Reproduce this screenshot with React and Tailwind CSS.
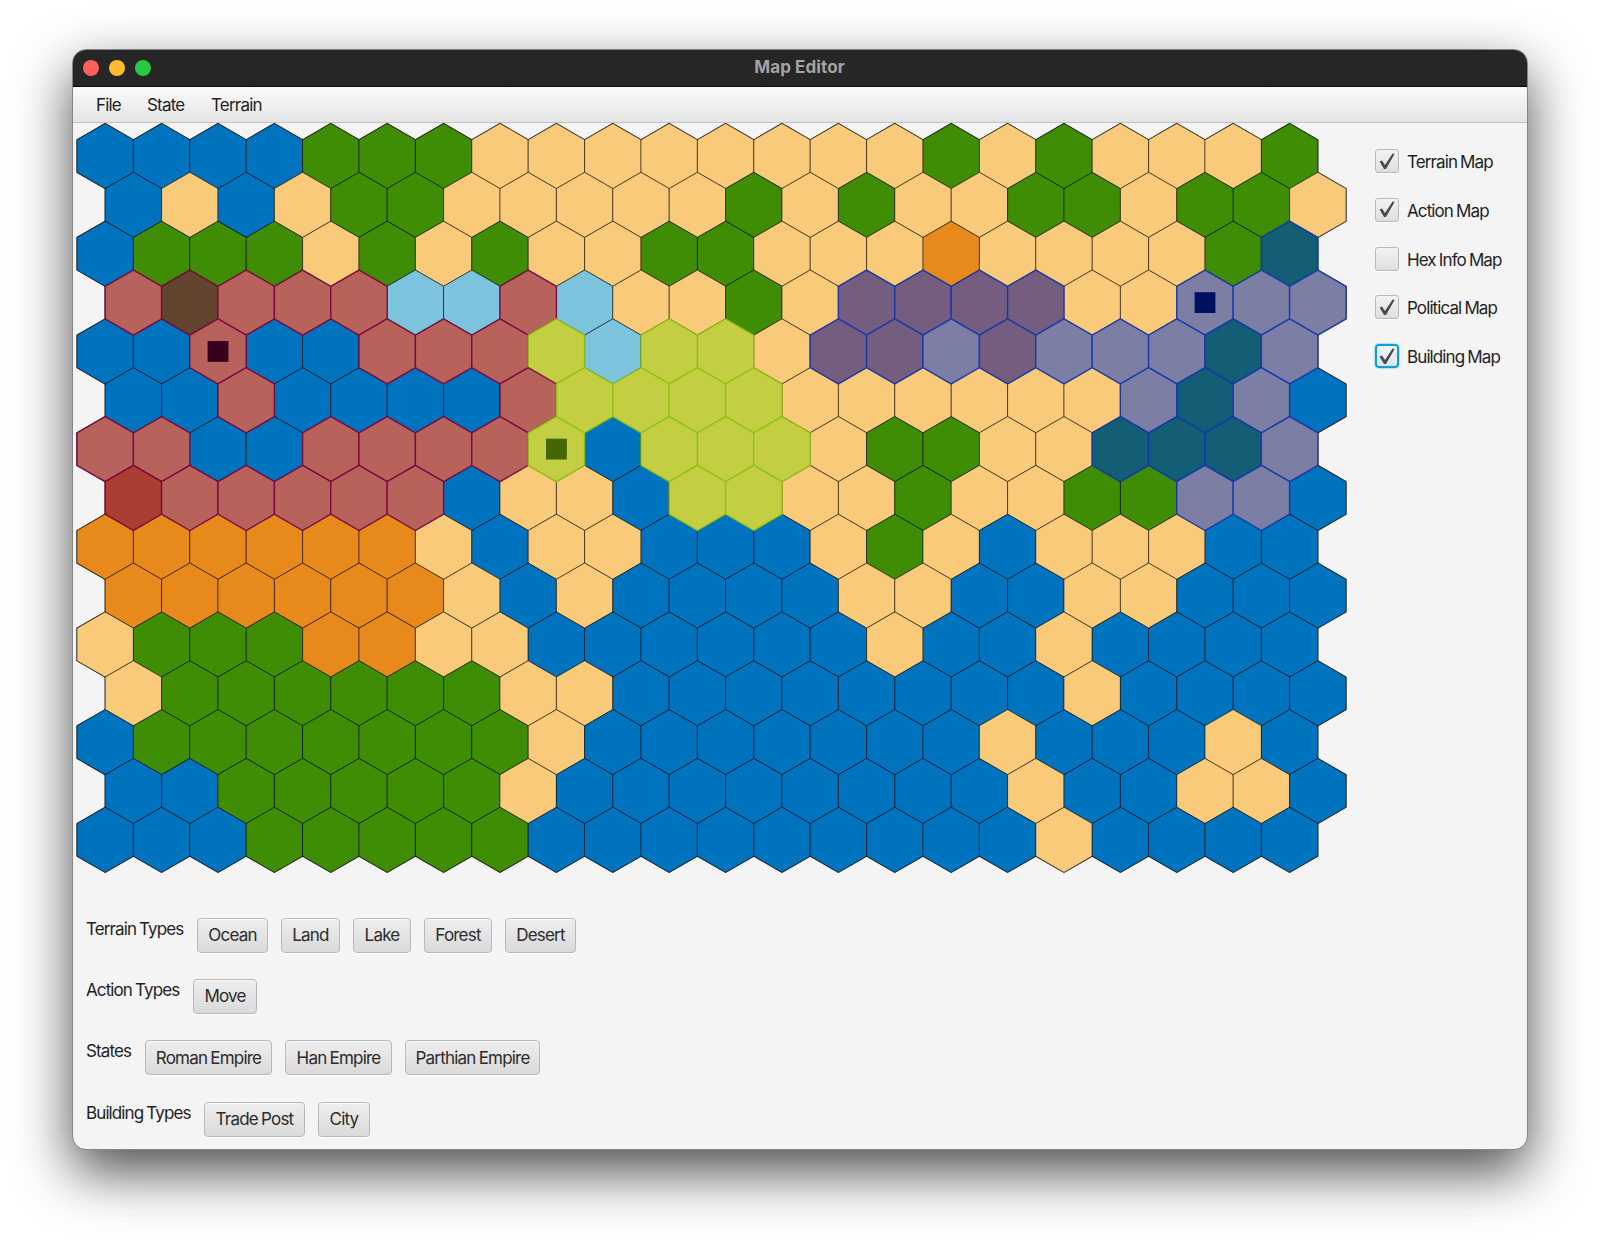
const W = 56.4;
const S = 32.56;
const PITCH = 48.84;

// O ocean, L land, K lake, F forest, D desert
// R/S/T: Roman land, forest, desert; P: Parthian land; H/I/J: Han land, forest, desert
const ROWS = [
  "OOOOFFFLLLLLLLLFLFLLLF",
  "OLOLFFLLLLLFLFLLFFLFFL",
  "OFFFLFLFLLFFLLLDLLLLFI",
  "RSRRRKKRKLLFLJJJJLLHHH",
  "OOROORRRPKPPLJJHJHHHIH",
  "OOROOOORPPPPLLLLLLHIHO",
  "RROORRRRPOPPPLFFLLIIIH",
  "TRRRRROLLOPPLLFLLFFHHO",
  "DDDDDDLOLLOOOLFLOLLLOO",
  "DDDDDDLOLOOOOLLOOLLOOO",
  "LFFFDDLLOOOOOOLOOLOOOO",
  "LFFFFFFLLOOOOOOOOLOOOO",
  "OFFFFFFFLOOOOOOOLOOOLO",
  "OOFFFFFLOOOOOOOOLOOLLO",
  "OOOFFFFFOOOOOOOOOLOOOO",
];

const TERRAIN = { O: "#0073bf", L: "#f8ca79", K: "#7cc4de", F: "#3f8d05", D: "#e8891b" };
const STATE = {
  R: { fill: "#b8625c", stroke: "#7a0040" },
  S: { fill: "#61452f", stroke: "#7a0040" },
  T: { fill: "#ab3d33", stroke: "#7a0040" },
  P: { fill: "#c3ce43", stroke: "#8cc211" },
  H: { fill: "#7c7ea4", stroke: "#0f34b4" },
  I: { fill: "#135e74", stroke: "#0f34b4" },
  J: { fill: "#745d7f", stroke: "#0f34b4" },
};
const BUILDINGS = [
  { row: 4, col: 2, color: "#38001e" },
  { row: 6, col: 8, color: "#446600" },
  { row: 3, col: 19, color: "#001060" },
];

const center = (row, col) => [W / 2 + col * W + (row % 2 ? W / 2 : 0) + 1, S + row * PITCH + 1.5];
const points = (row, col) => {
  const [x, y] = center(row, col);
  const h = W / 2;
  return [[0, -S], [h, -S / 2], [h, S / 2], [0, S], [-h, S / 2], [-h, -S / 2]]
    .map(([dx, dy]) => `${(x + dx).toFixed(2)},${(y + dy).toFixed(2)}`)
    .join(" ");
};
const CELLS = ROWS.flatMap((line, row) => [...line].map((kind, col) => ({ kind, row, col })));

function HexMap() {
  return (
    <svg className="block shrink-0" width="1272" height="752" viewBox="0 0 1272 752">
      {CELLS.map(({ row, col }) => (
        <polygon key={`${row}-${col}`} points={points(row, col)} fill="none" stroke="#000" strokeOpacity="0.8" strokeWidth="1.2" />
      ))}
      {CELLS.map(({ kind, row, col }) => (
        <polygon key={`${row}-${col}`} points={points(row, col)} fill={TERRAIN[kind] || "#f8ca79"} stroke="#000" strokeOpacity="0.5" strokeWidth="1" />
      ))}
      {CELLS.filter((c) => STATE[c.kind]).map(({ kind, row, col }) => (
        <polygon key={`${row}-${col}`} points={points(row, col)} fill={STATE[kind].fill} stroke={STATE[kind].stroke} strokeOpacity="0.85" strokeWidth="1.4" />
      ))}
      {BUILDINGS.map(({ row, col, color }) => {
        const [x, y] = center(row, col);
        return <rect key={color} x={x - 10.4} y={y - 10.4} width="20.8" height="20.8" fill={color} />;
      })}
    </svg>
  );
}

function Check({ label, checked, focused }) {
  return (
    <label className="flex h-6 items-center">
      <span
        className={
          focused
            ? "flex size-6 items-center justify-center rounded-[4px] border-2 border-[#119fd3] bg-linear-to-b from-[#eef6fa] to-[#dbe6ea] shadow-[0_0_1px_1px_#b5dff0]"
            : "flex size-6 items-center justify-center rounded-[3px] border border-[#b9b9b9] bg-linear-to-b from-[#f3f3f3] to-[#dedede] shadow-[0_1px_1px_#fff]"
        }
      >
        {checked && (
          <svg className="shrink-0" width="16" height="17" viewBox="0 0 16 17">
            <path d="M0.6 8.6 L3 7.6 L6 12 L13.6 0.6 L15.6 0.9 L7 16 L5 16 Z" fill="#4a4a4a" />
          </svg>
        )}
      </span>
      <span className="ml-2 pt-[2px] text-[17px] leading-6 tracking-[-0.9px] [word-spacing:-0.8px] whitespace-nowrap">{label}</span>
    </label>
  );
}

function ToolRow({ label, gap, items }) {
  return (
    <div className="flex h-[35px] items-start">
      <span className={`${gap} -mt-px shrink-0 text-[17px] leading-6 tracking-[-0.9px] [word-spacing:-0.8px] whitespace-nowrap`}>{label}</span>
      <div className="flex gap-[13px]">
        {items.map(([text, width]) => (
          <button
            key={text}
            className={`${width} h-[35px] rounded-[4px] border border-[#b8b8b8] bg-linear-to-b from-[#eeeeee] to-[#dadada] pt-px text-[17px] tracking-[-0.8px] [word-spacing:-0.8px] whitespace-nowrap text-[#2b2b2b] shadow-[inset_0_1px_0_#fafafa,0_1px_1px_#fff]`}
          >
            {text}
          </button>
        ))}
      </div>
    </div>
  );
}

export default function App() {
  return (
    <div className="h-[1246px] w-[1600px] overflow-hidden bg-white pt-[49px] pl-[72px] font-['Inter',sans-serif] text-[#1f1f1f]">
      <div className="flex h-[1101px] w-[1456px] flex-col overflow-hidden rounded-[14px] border border-[#858585] bg-[#f4f4f4] shadow-[0_22px_55px_rgba(0,0,0,0.7)]">
        <header className="flex h-[37px] shrink-0 items-center border-b border-b-[#0d0d0d] bg-[#262626]">
          <div className="flex w-[200px] gap-[10px] pl-[10px]">
            <span className="size-4 rounded-full bg-[#ff5f57]" />
            <span className="size-4 rounded-full bg-[#febc2e]" />
            <span className="size-4 rounded-full bg-[#28c840]" />
          </div>
          <h1 className="grow pr-px text-center text-[17px] font-bold tracking-[0.1px] text-[#a3a3a3]">Map Editor</h1>
          <div className="w-[200px]" />
        </header>
        <nav className="flex h-[36px] shrink-0 items-center border-b border-[#c3c3c3] bg-linear-to-b from-[#fbfbfb] to-[#e4e4e4] pt-[2px] pl-[23px] text-[17px] tracking-[-0.8px]">
          <span className="w-[51px]">File</span>
          <span className="w-[64px]">State</span>
          <span>Terrain</span>
        </nav>
        <main className="flex h-[795px] shrink-0 pl-[3px]">
          <div className="-mt-px">
            <HexMap />
          </div>
          <aside className="ml-[27px] flex flex-col gap-[24.8px] pt-[26px]">
            <Check label="Terrain Map" checked />
            <Check label="Action Map" checked />
            <Check label="Hex Info Map" />
            <Check label="Political Map" checked />
            <Check label="Building Map" checked focused />
          </aside>
        </main>
        <section className="flex flex-col gap-[26.2px] pl-[13px]">
          <ToolRow label="Terrain Types" gap="w-[111px]" items={[["Ocean", "w-[71px]"], ["Land", "w-[59px]"], ["Lake", "w-[58px]"], ["Forest", "w-[68px]"], ["Desert", "w-[71px]"]]} />
          <ToolRow label="Action Types" gap="w-[107px]" items={[["Move", "w-[64px]"]]} />
          <ToolRow label="States" gap="w-[59px]" items={[["Roman Empire", "w-[127px]"], ["Han Empire", "w-[107px]"], ["Parthian Empire", "w-[135px]"]]} />
          <ToolRow label="Building Types" gap="w-[118px]" items={[["Trade Post", "w-[101px]"], ["City", "w-[52px]"]]} />
        </section>
      </div>
    </div>
  );
}
